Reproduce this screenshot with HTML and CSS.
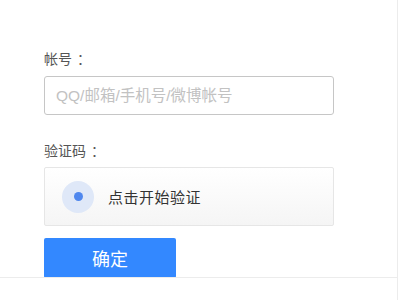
FILE: index.html
```html
<!DOCTYPE html>
<html lang="zh-CN">
<head>
<meta charset="utf-8">
<link rel="stylesheet" href="styles.css">
</head>
<body>
<div class="page">
  <div class="panel">
    <form class="form">
      <label class="label" for="account">帐号<span class="colon">：</span></label>
      <input class="input" id="account" type="text" placeholder="QQ/邮箱/手机号/微博帐号">
      <div class="label label-code">验证码<span class="colon">：</span></div>
      <div class="captcha">
        <span class="radar"><span class="dot"></span></span>
        <span class="captcha-text">点击开始验证</span>
      </div>
      <button class="submit" type="button">确定</button>
    </form>
  </div>
</div>
</body>
</html>
```
FILE: styles.css
```css
html, body {
  margin: 0;
  padding: 0;
  background: #fff;
}
body {
  width: 400px;
  height: 300px;
  overflow: hidden;
  font-family: "Liberation Sans", "Noto Sans CJK SC", sans-serif;
}
.page {
  width: 397px;
  height: 300px;
  border-right: 1px solid #ececec;
}
.panel {
  height: 278px;
  border-bottom: 1px solid #ececec;
  overflow: hidden;
  box-sizing: border-box;
}
.form {
  display: flex;
  flex-direction: column;
  align-items: flex-start;
  padding: 49px 0 0 44px;
}
.label {
  font-size: 14px;
  line-height: 20px;
  color: #555;
}
.colon {
  margin-left: 5px;
}
.input {
  margin-top: 7px;
  width: 290px;
  height: 39px;
  box-sizing: border-box;
  border: 1px solid #c6c6c6;
  border-radius: 3px;
  padding: 0 11px;
  font-family: inherit;
  font-size: 15.5px;
  color: #333;
  outline: none;
}
.input::placeholder {
  color: #c2c2c2;
}
.label-code {
  margin-top: 26px;
}
.captcha {
  margin-top: 6px;
  width: 290px;
  height: 59px;
  box-sizing: border-box;
  border: 1px solid #e6e6e6;
  border-radius: 2px;
  background: linear-gradient(#ffffff, #f5f5f5);
  display: flex;
  align-items: center;
  padding-left: 17px;
  gap: 14px;
}
.radar {
  width: 32px;
  height: 32px;
  border-radius: 50%;
  background: #dfe8f8;
  display: flex;
  align-items: center;
  justify-content: center;
}
.dot {
  width: 9px;
  height: 9px;
  border-radius: 50%;
  background: #4f87ee;
}
.captcha-text {
  font-size: 15px;
  color: #333;
  letter-spacing: 0.5px;
}
.submit {
  margin-top: 12px;
  width: 132px;
  height: 40px;
  border: none;
  border-radius: 2px;
  background: #3388ff;
  color: #fff;
  font-family: inherit;
  font-size: 18px;
  padding: 0;
}
```
